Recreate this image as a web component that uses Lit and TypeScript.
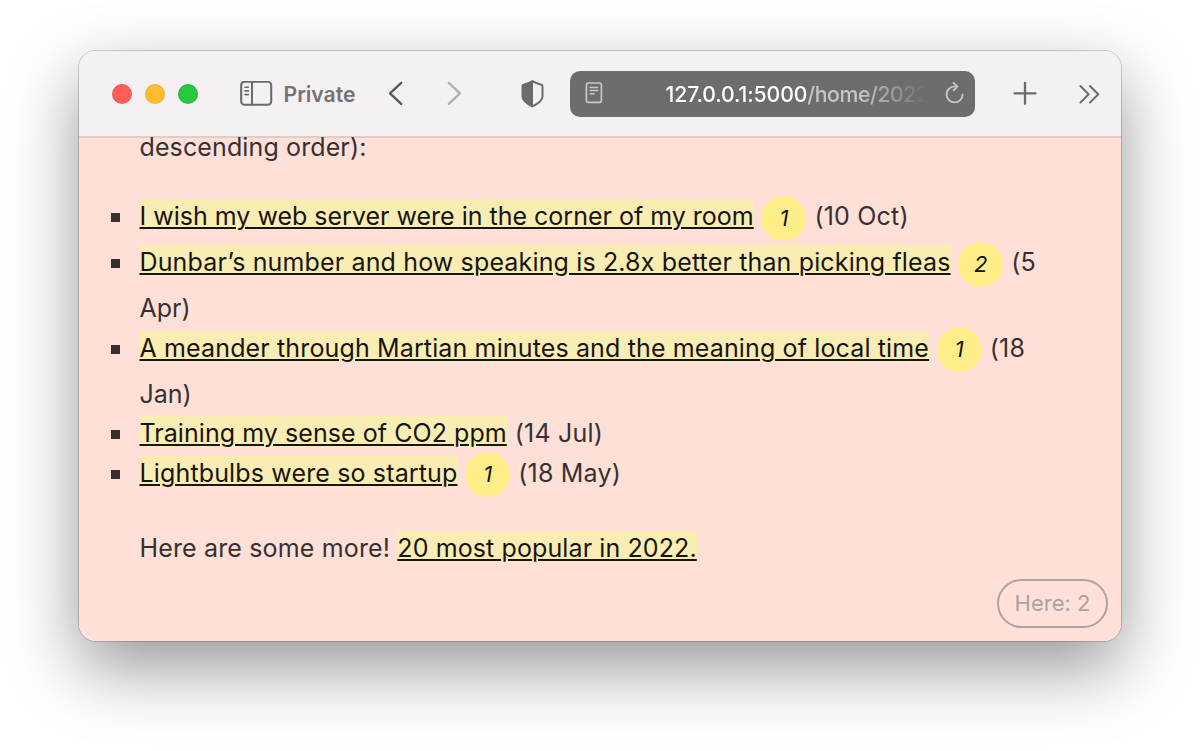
import { LitElement, html, css, svg, nothing } from "lit";
import { customElement } from "lit/decorators.js";

interface Post {
  title: string;
  tracking: number;
  here?: number;
  date: string;
  rest?: string;
}

const POSTS: Post[] = [
  { title: "I wish my web server were in the corner of my room", tracking: 0, here: 1, date: "(10 Oct)" },
  { title: "Dunbar’s number and how speaking is 2.8x better than picking fleas", tracking: 0.148, here: 2, date: "(5", rest: "Apr)" },
  { title: "A meander through Martian minutes and the meaning of local time", tracking: 0.138, here: 1, date: "(18", rest: "Jan)" },
  { title: "Training my sense of CO2 ppm", tracking: 0.06, date: "(14 Jul)" },
  { title: "Lightbulbs were so startup", tracking: 0.147, here: 1, date: "(18 May)" },
];

const icon = (cls: string, width: number, height: number, body: unknown) =>
  html`<svg class="icon ${cls}" width=${width} height=${height} viewBox="0 0 ${width} ${height}">${body}</svg>`;

@customElement("browser-toolbar")
export class BrowserToolbar extends LitElement {
  static styles = css`
    :host {
      display: flex;
      align-items: center;
      box-sizing: border-box;
      flex: none;
      height: 87px;
      padding: 0 22px 0 32.5px;
      border-bottom: 2px solid #e0cdca;
      background: #f5f1f3;
      color: #6d6a6b;
      font-size: 21.2px;
    }
    .lights { display: flex; gap: 13px; }
    .light { width: 20px; height: 20px; border-radius: 50%; box-sizing: border-box; border: 1px solid rgba(0, 0, 0, 0.07); }
    .red { background: #ff5f57; }
    .amber { background: #febc2e; }
    .green { background: #28c840; }
    .icon { display: block; flex: none; fill: none; stroke: currentColor; stroke-linecap: round; stroke-linejoin: round; }
    .sidebar { margin-left: 42px; }
    .private { margin-left: 11px; width: 72.5px; font-weight: 600; color: #757273; white-space: nowrap; }
    .back { margin-left: 32px; color: #5c595a; }
    .forward { margin-left: 44px; color: #b3b0b1; }
    .shield { margin-left: 58px; }
    .address {
      display: flex;
      align-items: center;
      box-sizing: border-box;
      width: 405px;
      flex: none;
      height: 46px;
      margin-left: 25px;
      padding: 0 10px 0 15px;
      border-radius: 10px;
      background: #706c6b;
      color: #c9c7c6;
    }
    .url {
      flex: none;
      width: 272px;
      margin: 0 -14px 0 63px;
      white-space: nowrap;
      font-weight: 500;
      letter-spacing: -0.1px;
      -webkit-mask-image: linear-gradient(90deg, #000 195px, transparent 260px);
      mask-image: linear-gradient(90deg, #000 195px, transparent 260px);
    }
    .host { color: #fff; }
    .path { letter-spacing: -0.4px; }
    .reload { margin-left: 21px; }
    .plus { margin-left: 38.5px; }
    .more { margin-left: 42px; }
  `;

  render() {
    return html`
      <div class="lights">
        <span class="light red"></span><span class="light amber"></span><span class="light green"></span>
      </div>
      ${icon("sidebar", 33, 26, svg`
        <rect x="1.2" y="0.8" width="30" height="23" rx="3.4" stroke-width="2.1"/>
        <path d="M12 1.2V23.6" stroke-width="2"/>
        <path d="M5 6.2h3.4M5 9.9h3.4M5 13.6h3.4" stroke-width="1.6"/>`)}
      <span class="private">Private</span>
      ${icon("back", 15, 26, svg`<path d="M13.2 1.8 2 12.3l11.2 10.6" stroke-width="2.4"/>`)}
      ${icon("forward", 15, 26, svg`<path d="M1.8 1.8 13 12.3 1.8 22.9" stroke-width="2.4"/>`)}
      ${icon("shield", 25, 28, svg`
        <path d="M12.5 1.2C15.4 3 19 4.2 21.4 4.7Q22.5 5 22.5 6.2V16.5c0 4.4-4 7-10 9.8C6.5 23.5 2.5 20.9 2.5 16.5V6.2Q2.5 5 3.6 4.7C6 4.2 9.6 3 12.5 1.2z" stroke-width="2"/>
        <path d="M12.5 1.2V26.3C6.5 23.5 2.5 20.9 2.5 16.5V6.2Q2.5 5 3.6 4.7C6 4.2 9.6 3 12.5 1.2z" fill="currentColor" stroke-width="1"/>`)}
      <div class="address">
        ${icon("reader", 18, 23, svg`
          <rect x="1.4" y="1" width="15" height="19.4" rx="2.2" stroke-width="1.7"/>
          <path d="M5.2 5.4h7.4M5.2 8.6h7.4M5.2 11.8h3.8" stroke-width="1.5"/>`)}
        <div class="url"><span class="host">127.0.0.1:5000</span><span class="path">/home/2022</span></div>
        ${icon("reload", 19, 23, svg`
          <path d="M10.4 4.4H9.6A8 8 0 1 0 17.6 12.4" stroke-width="1.8"/>
          <path d="M8.6 0.9 12.4 4.6 8.6 8.4" stroke-width="1.8"/>`)}
      </div>
      ${icon("plus", 24, 26, svg`<path d="M12 1.8v21M1.5 12.3h21" stroke-width="2.3"/>`)}
      ${icon("more", 22, 20, svg`<path d="M1.4 2 9.6 10.2 1.4 18.6M10.9 2l8.4 8.2-8.4 8.4" stroke-width="2"/>`)}
    `;
  }
}

@customElement("app-root")
export class AppRoot extends LitElement {
  static styles = css`
    :host {
      display: block;
      box-sizing: border-box;
      width: 1200px;
      height: 751px;
      padding: 51px 79px 0;
      overflow: hidden;
      background: #fff;
      font-family: Inter, "Liberation Sans", sans-serif;
    }
    .window {
      display: flex;
      flex-direction: column;
      position: relative;
      width: 1042px;
      height: 589.5px;
      border-radius: 17px;
      box-shadow: 0 0 0 1px rgba(0, 0, 0, 0.17), 0 27px 70px rgba(0, 0, 0, 0.41);
    }
    .clip {
      display: flex;
      flex-direction: column;
      flex: 1;
      min-height: 0;
      border-radius: 17px;
      overflow: hidden;
      background: #fee0d9;
    }
    .page {
      flex: 1;
      min-height: 0;
      font-size: 25px;
      line-height: 39.5px;
      color: #363130;
    }
    p { margin: 0; padding-left: 60.5px; white-space: nowrap; }
    .intro { margin-top: -10px; letter-spacing: 0.12px; }
    .posts { margin: 29.6px 0 29.5px; padding: 0 0 0 32px; list-style: none; }
    .post { display: grid; grid-template-columns: 28.5px 1fr; }
    .bullet { width: 9px; height: 9px; margin-top: 16px; background: #363130; }
    .line { display: flex; align-items: baseline; gap: 8px; height: 39.5px; white-space: nowrap; }
    .line.tall { height: 46px; }
    a {
      padding-top: 2px;
      background: linear-gradient(#faedb4, #faedb4) no-repeat 0 0 / 100% 30.5px;
      color: #171513;
      text-decoration: underline;
      text-decoration-thickness: 1.5px;
      text-underline-offset: 2px;
    }
    .date { letter-spacing: 0.2px; }
    .badge {
      align-self: flex-start;
      width: 45px;
      height: 45px;
      margin: -1.4px 0 0 -0.3px;
      border-radius: 50%;
      background: #fdee8a;
      color: #111;
      font-size: 22px;
      font-style: italic;
      line-height: 45px;
      text-align: center;
    }
    .more-label { letter-spacing: 0.15px; }
    .more-link { letter-spacing: 0.11px; }
    .presence {
      position: absolute;
      right: 13px;
      bottom: 13px;
      box-sizing: border-box;
      width: 111px;
      height: 49px;
      border: 2px solid #ada39f;
      border-radius: 25px;
      color: #aca29e;
      font-size: 22px;
      line-height: 44px;
      text-align: center;
    }
  `;

  private renderPost(post: Post) {
    return html`
      <li class="post">
        <span class="bullet"></span>
        <div>
          <div class="line ${post.here ? "tall" : ""}">
            <span><a style="letter-spacing:${post.tracking}px">${post.title}</a></span>
            ${post.here ? html`<span class="badge">${post.here}</span>` : nothing}
            <span class="date">${post.date}</span>
          </div>
          ${post.rest ? html`<div class="line">${post.rest}</div>` : nothing}
        </div>
      </li>
    `;
  }

  render() {
    return html`
      <div class="window">
        <div class="clip">
          <browser-toolbar></browser-toolbar>
          <main class="page">
            <p class="intro">descending order):</p>
            <ul class="posts">${POSTS.map((post) => this.renderPost(post))}</ul>
            <p><span class="more-label">Here are some more! </span><a class="more-link">20 most popular in 2022.</a></p>
          </main>
        </div>
        <div class="presence">Here: 2</div>
      </div>
    `;
  }
}
